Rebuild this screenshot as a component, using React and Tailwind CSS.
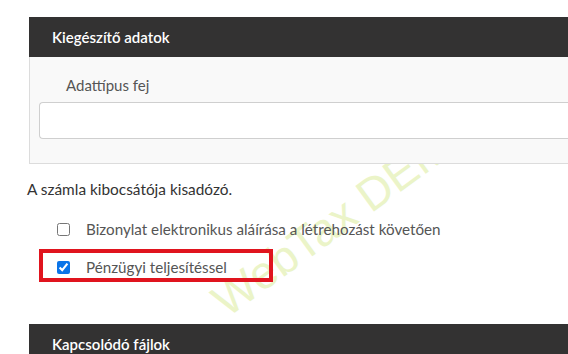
import React from 'react'

const SectionHeader = ({ title }) => (
  <div className="flex h-[40px] items-center bg-[#333232] pl-[23px] text-[15px] font-semibold text-white">
    {title}
  </div>
)

const CheckRow = ({ label, checked, highlight }) => (
  <div className="relative ml-[57px] flex h-[20px] items-center gap-[16px]">
    <input
      type="checkbox"
      defaultChecked={checked}
      className="m-0 h-[13px] w-[13px] accent-[#0a74e8]"
    />
    <span className="text-[15.2px] text-[#555]">{label}</span>
    {highlight && (
      <span className="pointer-events-none absolute left-[-18px] top-[-8px] h-[33px] w-[234px] border-[4px] border-[#e0141e]" />
    )}
  </div>
)

export default function App() {
  return (
    <div className="relative h-[354px] w-[568px] overflow-hidden bg-white font-['Lato',sans-serif] leading-[20px]">
      {/* watermark, sits under the panels */}
      <span className="pointer-events-none absolute left-[231px] top-[278px] origin-[0_100%] -rotate-[36deg] whitespace-nowrap font-['Liberation_Sans',sans-serif] text-[46px] leading-none text-[#ebf4c8]">
        WebTax DEMO
      </span>

      <div className="relative pt-[17px]">
        <div className="ml-[29px]">
          <SectionHeader title="Kiegészítő adatok" />
          <div className="border-b border-l border-[#dcdcdc] bg-[#f9f9f9] pb-[24px] pl-[9px] pt-[18px]">
            <div className="pl-[27px] text-[15px] text-[#555]">Adattípus fej</div>
            <div className="mt-[7px] h-[37px] rounded-l-[4px] border border-r-0 border-[#cfcfcf] bg-white" />
          </div>
        </div>

        <p className="ml-[27px] mt-[15px] text-[15.4px] text-[#333]">A számla kibocsátója kisadózó.</p>

        <div className="mt-[20px]">
          <CheckRow label="Bizonylat elektronikus aláírása a létrehozást követően" />
        </div>
        <div className="mt-[18px]">
          <CheckRow label="Pénzügyi teljesítéssel" checked highlight />
        </div>

        <div className="ml-[29px] mt-[47px]">
          <SectionHeader title="Kapcsolódó fájlok" />
        </div>
      </div>
    </div>
  )
}
